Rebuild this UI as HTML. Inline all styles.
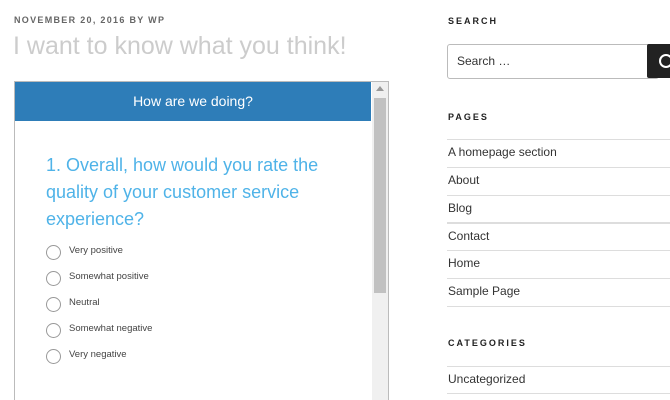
<!DOCTYPE html><html style="height:400px;overflow:hidden"><head><style>
body{margin:0;width:670px;height:400px;overflow:hidden;background:#fff;font-family:"Liberation Sans",sans-serif;position:relative}
.a{position:absolute;white-space:nowrap}
.h{font-size:9px;font-weight:bold;letter-spacing:2px;color:#222}
.l{position:absolute;left:447px;width:223px;height:1px;background:#ddd}
.p{position:absolute;left:448px;font-size:12px;color:#333}
.r{position:absolute;left:46px;width:13px;height:13px;border:1px solid #999;border-radius:50%}
.t{position:absolute;left:69px;font-size:9.5px;color:#444}
.q{position:absolute;left:46px;font-size:18px;color:#4fb3e8}
</style></head><body>
<div class="a" style="left:14px;top:15px;font-size:9px;font-weight:bold;letter-spacing:1.3px;color:#666">NOVEMBER 20, 2016 BY WP</div>
<div class="a" style="left:13px;top:32px;font-size:25px;color:#ccc">I want to know what you think!</div>
<div class="a" style="left:14px;top:81px;width:373px;height:322px;border:1px solid #bbb"></div>
<div class="a" style="left:15px;top:82px;width:356px;height:39px;background:#2e7db8;color:#fff;font-size:14px;text-align:center;line-height:39px">How are we doing?</div>
<div class="a" style="left:372px;top:82px;width:16px;height:320px;background:#f0f0f0"></div>
<div class="a" style="left:374px;top:98px;width:12px;height:195px;background:#c1c1c1"></div>
<div class="a" style="left:376px;top:86px;width:0;height:0;border-left:4px solid transparent;border-right:4px solid transparent;border-bottom:5px solid #999"></div>
<div class="q" style="top:155px">1. Overall, how would you rate the</div>
<div class="q" style="top:182px">quality of your customer service</div>
<div class="q" style="top:209px">experience?</div>
<div class="r" style="top:245px"></div><div class="t" style="top:245px">Very positive</div>
<div class="r" style="top:271px"></div><div class="t" style="top:271px">Somewhat positive</div>
<div class="r" style="top:297px"></div><div class="t" style="top:297px">Neutral</div>
<div class="r" style="top:323px"></div><div class="t" style="top:323px">Somewhat negative</div>
<div class="r" style="top:349px"></div><div class="t" style="top:349px">Very negative</div>
<div class="a h" style="left:448px;top:16px">SEARCH</div>
<div class="a" style="left:447px;top:44px;width:210px;height:33px;border:1px solid #bbb;border-radius:3px"></div>
<div class="a" style="left:457px;top:54px;font-size:12px;color:#333">Search …</div>
<div class="a" style="left:647px;top:44px;width:23px;height:34px;background:#222;border-radius:2px 0 0 2px"></div>
<div class="a" style="left:659px;top:54px;width:10px;height:10px;border:2px solid #fff;border-radius:50%"></div>
<div class="a h" style="left:448px;top:112px">PAGES</div>
<div class="l" style="top:139px"></div>
<div class="p" style="top:145px">A homepage section</div>
<div class="l" style="top:167px"></div>
<div class="p" style="top:173px">About</div>
<div class="l" style="top:195px"></div>
<div class="p" style="top:201px">Blog</div>
<div class="l" style="top:222px;height:2px"></div>
<div class="p" style="top:229px">Contact</div>
<div class="l" style="top:250px"></div>
<div class="p" style="top:256px">Home</div>
<div class="l" style="top:278px"></div>
<div class="p" style="top:284px">Sample Page</div>
<div class="l" style="top:306px"></div>
<div class="a h" style="left:448px;top:338px">CATEGORIES</div>
<div class="l" style="top:366px"></div>
<div class="p" style="top:372px">Uncategorized</div>
<div class="l" style="top:393px"></div>
</body></html>
